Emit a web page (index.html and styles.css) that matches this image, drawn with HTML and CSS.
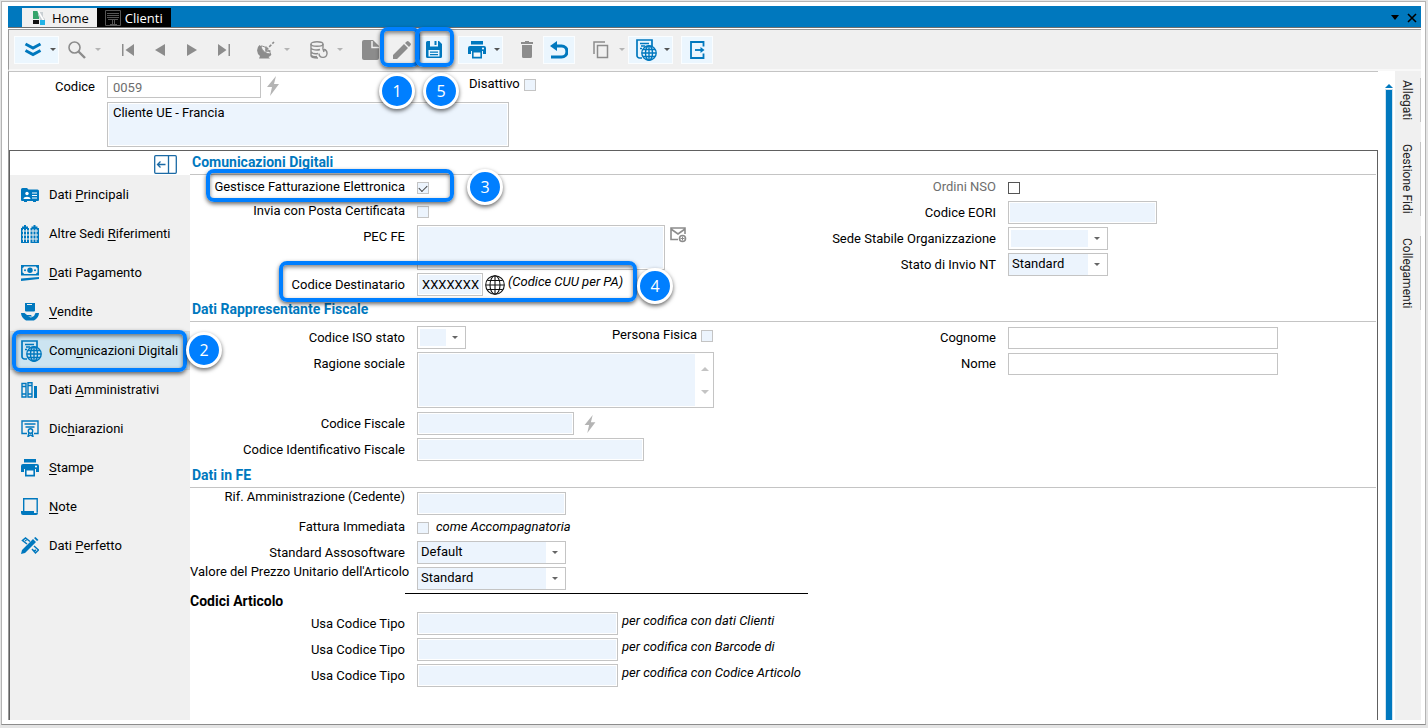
FILE: index.html
```html
<!DOCTYPE html>
<html lang="it">
<head>
    <meta charset="UTF-8">
    <meta name="viewport" content="width=device-width, initial-scale=1.0">
    <title>Clienti</title>
    <link rel="stylesheet" href="styles.css">
</head>
<body>

    <!-- Icone usate in più punti -->
    <svg class="sprites" width="0" height="0" aria-hidden="true">
        <symbol id="i-print" viewBox="0 0 18 18">
            <path d="M3 0h12v3.5H3zM2 5h14a2 2 0 0 1 2 2v6h-3v-3H3v3H0V7a2 2 0 0 1 2-2z"/>
            <path d="M4.8 10.8h8.4v5.8H4.8z" fill="#f4f8fb" stroke="currentColor" stroke-width="1.6"/>
            <circle cx="15" cy="7.500" r="1" fill="#fff"/>
        </symbol>
        <symbol id="i-web" viewBox="0 0 21 22">
            <path d="M6 19H3.500A2.500 2.500 0 0 1 1 16.500V1h15v6M4 4.500h9M5 7h4M4 9.500h2" fill="none" stroke="currentColor" stroke-width="1.700"/>
            <g fill="none" stroke="currentColor" stroke-width="1.400">
                <circle cx="13" cy="14" r="7.200"/>
                <ellipse cx="13" cy="14" rx="3.500" ry="7.200"/>
                <path d="M13 7v14M6 14h14M7 10.500h12M7 17.500h12"/>
            </g>
        </symbol>
        <symbol id="i-bolt" viewBox="0 0 12 20">
            <path d="M9 0 0 11h5L3 20l9-12H7z"/>
        </symbol>
    </svg>

    <div class="window">
        <header class="titlebar">
            <nav class="tabs">
                <a class="tab" href="#home">
                    <svg width="14" height="16" viewBox="0 0 14 16">
                        <path d="M1 1h6v8H1z" fill="#35a36a"/>
                        <path d="M7 2h4v5l2 2v5h-3L6 5z" fill="#c9cfd3"/>
                        <path d="m6 1 6 10" stroke="#fff" stroke-width="1.500"/>
                        <path d="M1 10h6v4H1z" fill="#111"/>
                        <path d="M8 10h5v5H8z" fill="#22b3e6"/>
                    </svg>
                    Home
                </a>
                <a class="tab tab-active" href="#clienti">
                    <svg width="16" height="16" viewBox="0 0 16 16" fill="none" stroke="#555">
                        <path d="M.5.5h15v15H.5zM2 3.500h12M2 5.500h12M2 7.500h12M3 9.500h10M7.500 10v5M9.500 10v5M5 14.500h7"/>
                    </svg>
                    Clienti
                </a>
            </nav>
            <div class="window-buttons">
                <button type="button" aria-label="Elenco finestre">
                    <svg width="8" height="5" viewBox="0 0 8 5"><path d="M0 0h8L4 5z"/></svg>
                </button>
                <button type="button" aria-label="Chiudi">
                    <svg width="10" height="10" viewBox="0 0 10 10"><path d="m1 1 8 8M9 1 1 9" stroke="#000" stroke-width="1.600"/></svg>
                </button>
            </div>
        </header>

        <div class="toolbar" role="toolbar">
            <button type="button" class="tool split on" aria-label="Espandi">
                <svg width="18" height="15" viewBox="0 0 18 15" fill="none" stroke="currentColor" stroke-width="3"><path d="m1.500 2 7.500 4 7.500-4M1.500 8.500l7.500 4 7.500-4"/></svg>
                <i class="caret"></i>
            </button>
            <button type="button" class="tool split" aria-label="Cerca">
                <svg width="18" height="18" viewBox="0 0 18 18" fill="none" stroke="currentColor"><circle cx="6.500" cy="6.500" r="5.500" stroke-width="1.600"/><path d="m10.500 10.500 6.500 6.500" stroke-width="2.400"/></svg>
                <i class="caret"></i>
            </button>
            <span class="gap"></span>
            <button type="button" class="tool" aria-label="Primo">
                <svg width="12" height="12" viewBox="0 0 12 12"><path d="M0 0h1.500v12H0zM12 0v12L3.500 6z"/></svg>
            </button>
            <button type="button" class="tool" aria-label="Precedente">
                <svg width="10" height="12" viewBox="0 0 10 12"><path d="M10 0v12L0 6z"/></svg>
            </button>
            <button type="button" class="tool" aria-label="Successivo">
                <svg width="10" height="12" viewBox="0 0 10 12"><path d="M0 0v12l10-6z"/></svg>
            </button>
            <button type="button" class="tool" aria-label="Ultimo">
                <svg width="12" height="12" viewBox="0 0 12 12"><path d="M10.500 0H12v12h-1.500zM0 0v12l8.500-6z"/></svg>
            </button>
            <span class="gap"></span>
            <button type="button" class="tool split" aria-label="Trasmetti">
                <svg width="18" height="18" viewBox="0 0 18 18">
                    <path d="M2.500 4A7 7 0 0 0 3 15l-1 2.500h11L11.500 16a6 6 0 0 0 3-2.500z"/>
                    <path d="M4 5c4 0 9 4 9.500 8-4 0-9-3-9.500-8z" fill="#f0f0f0" stroke="currentColor"/>
                    <path d="m9 9 8-8" stroke="currentColor" stroke-width="1.600" stroke-dasharray="3 1.500"/>
                    <path d="M9 5.500V10h4.500" fill="none" stroke="currentColor" stroke-width="1.500"/>
                </svg>
                <i class="caret"></i>
            </button>
            <span class="gap"></span>
            <button type="button" class="tool split" aria-label="Archivio">
                <svg width="18" height="18" viewBox="0 0 18 18" fill="none" stroke="currentColor" stroke-width="1.400">
                    <ellipse cx="7" cy="3" rx="6" ry="2.200"/>
                    <path d="M1 3v11.500C1 16 4 17 8 17M13 3v4M1 7c1 2 6 2.500 9 1.500M1 10.500c1 2 4 2.500 7 2M1 14c1 1.500 4 2 6 1.500"/>
                    <path d="M14 8.500a4 4 0 1 1-5 4M16 9l-3-1 1 3"/>
                </svg>
                <i class="caret"></i>
            </button>
            <span class="gap"></span>
            <button type="button" class="tool" aria-label="Nuovo">
                <svg width="17" height="20" viewBox="0 0 17 20"><path d="M2 0h9l6 6v12a2 2 0 0 1-2 2H2a2 2 0 0 1-2-2V2a2 2 0 0 1 2-2z"/><path d="M10 1v6.500h7" fill="none" stroke="#f0f0f0" stroke-width="1.500"/></svg>
            </button>
            <button type="button" class="tool" aria-label="Modifica">
                <svg width="18" height="18" viewBox="0 0 18 18"><path d="M0 18v-4L11 3l4 4L4 18zM12 2l1.700-1.500a1.500 1.500 0 0 1 2 0l1.800 1.800a1.500 1.500 0 0 1 0 2L16 6z"/></svg>
            </button>
            <button type="button" class="tool on" aria-label="Salva">
                <svg width="16" height="17" viewBox="0 0 16 17"><path fill-rule="evenodd" d="M1.500 0H13l3 3v12.500a1.500 1.500 0 0 1-1.500 1.500h-13A1.500 1.500 0 0 1 0 15.500v-14A1.500 1.500 0 0 1 1.500 0zM4 0v5.500h8V0h-1.500v4h-2V0zM2.500 9v6.500h11V9z"/><path d="M4 10.500h8v1.300H4zm0 2.500h8v1.300H4z"/></svg>
            </button>
            <span class="gap"></span>
            <button type="button" class="tool split on" aria-label="Stampa">
                <svg width="18" height="18"><use href="#i-print"/></svg>
                <i class="caret"></i>
            </button>
            <span class="gap"></span>
            <button type="button" class="tool" aria-label="Elimina">
                <svg width="12" height="17" viewBox="0 0 12 17"><path d="M4 0h4v1h4v2H0V1h4zM1 4h10v11.500a1.500 1.500 0 0 1-1.500 1.500h-7A1.500 1.500 0 0 1 1 15.500z"/></svg>
            </button>
            <button type="button" class="tool on" aria-label="Annulla">
                <svg width="18" height="18" viewBox="0 0 18 18"><path d="M7 0v10L0 5z"/><path d="M4 5h7.500a5 5 0 0 1 0 11H1" fill="none" stroke="currentColor" stroke-width="3.200"/></svg>
            </button>
            <span class="gap"></span>
            <button type="button" class="tool split" aria-label="Copia">
                <svg width="16" height="18" viewBox="0 0 16 18" fill="none" stroke="currentColor" stroke-width="1.500"><path d="M4.500 4.500h10v12h-10zM1 13V1h11"/></svg>
                <i class="caret"></i>
            </button>
            <button type="button" class="tool split on" aria-label="Comunicazioni">
                <svg width="21" height="22"><use href="#i-web"/></svg>
                <i class="caret"></i>
            </button>
            <span class="gap"></span>
            <button type="button" class="tool on" aria-label="Esci">
                <svg width="15" height="18" viewBox="0 0 15 18" fill="none" stroke="currentColor" stroke-width="1.800"><path d="M13.500 5.500V1H1v16h12.500v-4.500"/><path d="M5 9h7"/><path d="M10.500 6v6l4-3z" fill="currentColor" stroke="none"/></svg>
            </button>
        </div>

        <div class="workspace">
            <main class="card">
                <form class="customer">
                    <label for="codice">Codice</label>
                    <div class="line">
                        <input class="field white w-154" type="text" id="codice" value="0059">
                        <svg class="bolt" width="12" height="20"><use href="#i-bolt"/></svg>
                        <span class="disattivo">
                            <label for="disattivo">Disattivo</label>
                            <input class="check" type="checkbox" id="disattivo">
                        </span>
                    </div>
                    <textarea class="field descrizione" id="descrizione" aria-label="Descrizione">Cliente UE - Francia</textarea>
                </form>

                <div class="panel">
                    <nav class="menu">
                        <div class="menu-top">
                            <button type="button" aria-label="Comprimi menu">
                                <svg width="23" height="19" viewBox="0 0 23 19" fill="none" stroke="#1b6aa5" stroke-width="1.300"><rect x=".7" y=".7" width="21.600" height="17.600" rx="1"/><path d="M14.500 1v17M3.500 9.500h8M6.500 6.500l-3 3 3 3"/></svg>
                            </button>
                        </div>
                        <a href="#principali">
                            <svg width="18" height="14" viewBox="0 0 18 14"><path d="M0 1.500A1.500 1.500 0 0 1 1.500 0H6l1.500 1.500h9A1.500 1.500 0 0 1 18 3v9a1 1 0 0 1-1 1h-2v1h-3v-1H6v1H3v-1H1a1 1 0 0 1-1-1z"/><circle cx="6" cy="5.500" r="1.700" fill="#fff"/><path d="M2.500 11c0-3 7-3 7 0zM11 4.500h5v1h-5zm0 2.500h5v1h-5zm0 2.500h5v1h-5z" fill="#fff"/></svg>
                            <span>Dati <u>P</u>rincipali</span>
                        </a>
                        <a href="#sedi">
                            <svg width="18" height="18" viewBox="0 0 18 18"><path d="M0 3h1V1.500h2V0h2v1.500h2V3h1v15H0zM9.500 3h1V1.500h2V0h2v1.500h2V3h1.500v15H9.500z"/><path d="M2.500 4v13M5.500 4v13M12 4v13M15 4v13M1 6h16M1 10h16M1 14h16" stroke="#f0f0f0"/></svg>
                            <span>Altre Sedi <u>R</u>iferimenti</span>
                        </a>
                        <a href="#pagamento">
                            <svg width="18" height="16" viewBox="0 0 18 16"><path fill-rule="evenodd" d="M0 0h18v10.500H0zM3 1.500A2 2 0 0 1 1.500 3v4.500A2 2 0 0 1 3 9h12a2 2 0 0 1 1.500-1.500V3A2 2 0 0 1 15 1.500z"/><circle cx="9" cy="5.200" r="2.700"/><circle cx="4" cy="5.200" r="1"/><circle cx="14" cy="5.200" r="1"/><path d="M0 13.500 18 12v2L0 16z"/></svg>
                            <span><u>D</u>ati Pagamento</span>
                        </a>
                        <a href="#vendite">
                            <svg width="18" height="18" viewBox="0 0 18 18"><path d="M4 0h10v7.500a1 1 0 0 1-1 1H5a1 1 0 0 1-1-1z"/><path d="M6 1.500h5" stroke="#f0f0f0"/><path d="M0 10h3.500l2.500 2h4l1 1.500H7l3 1 3-1.500 1.500-3H18c0 3-2 6-5 7.500H5C2 16 0 13 0 10z"/></svg>
                            <span><u>V</u>endite</span>
                        </a>
                        <a class="selected" href="#comunicazioni">
                            <svg width="21" height="22"><use href="#i-web"/></svg>
                            <span>Com<u>u</u>nicazioni Digitali</span>
                        </a>
                        <a href="#amministrativi">
                            <svg width="17" height="16" viewBox="0 0 17 16" fill="none" stroke="currentColor" stroke-width="1.400"><path d="M1 1.500h4v13.500H1zM7 .7h4v14.300H7zM1 4.500h4M7 3.500h4M1 12h4M7 12h4"/><path d="M13 4h3v12h-3z" fill="currentColor" stroke="none"/></svg>
                            <span>Dati <u>A</u>mministrativi</span>
                        </a>
                        <a href="#dichiarazioni">
                            <svg width="18" height="17" viewBox="0 0 18 17" fill="none" stroke="currentColor" stroke-width="1.400"><path d="M6 13.500H1V1h16v12.500h-4M3.500 4h11M4.500 7h9"/><circle cx="9.500" cy="11" r="2.200"/><path d="m8 12.500-1 4 2.500-1.500 2.500 1.500-1-4"/></svg>
                            <span>Dic<u>h</u>iarazioni</span>
                        </a>
                        <a href="#stampe">
                            <svg width="18" height="18"><use href="#i-print"/></svg>
                            <span><u>S</u>tampe</span>
                        </a>
                        <a href="#note">
                            <svg width="17" height="17" viewBox="0 0 17 17"><path d="M2.700 13V.7h13.500v14" fill="none" stroke="currentColor" stroke-width="1.400"/><path d="M0 13h13v2h4a2 2 0 0 1-2 2H2a2 2 0 0 1-2-2z"/></svg>
                            <span><u>N</u>ote</span>
                        </a>
                        <a href="#perfetto">
                            <svg width="18" height="18" viewBox="0 0 18 18"><path d="m0 17 1-4L12 2l3 3L4 16zM13 1l1.500-1 3 3L16 4z"/><path d="M6 7 1.500 3.500 4.500 1 9 4.500M11 12l3.500 4 3-3L13 9M4 4l1.500-1M13 14l2-1" fill="none" stroke="currentColor" stroke-width="1.500"/></svg>
                            <span>Dati <u>P</u>erfetto</span>
                        </a>
                    </nav>

                    <form class="details">
                        <h2>Comunicazioni Digitali</h2>
                        <section class="columns comunicazioni">
                            <div class="column">
                                <div class="row short">
                                    <label for="gestisce">Gestisce Fatturazione Elettronica</label>
                                    <input class="check" type="checkbox" id="gestisce" checked>
                                </div>
                                <div class="row short">
                                    <label for="invia">Invia con Posta Certificata</label>
                                    <input class="check" type="checkbox" id="invia">
                                </div>
                                <div class="row top pec">
                                    <label for="pec">PEC FE</label>
                                    <textarea class="field" id="pec"></textarea>
                                    <svg class="mail" width="17" height="16" viewBox="0 0 17 16" fill="none" stroke="#8c8c8c" stroke-width="1.600"><path d="M8 12.500H1V1h14v6M1 2l7 5 7-5"/><circle cx="12.500" cy="11.500" r="3"/><path d="M12.500 9.500v4M10.500 11.500h4" stroke-width="1"/></svg>
                                </div>
                                <div class="row">
                                    <label for="destinatario">Codice Destinatario</label>
                                    <input class="field w-66" type="text" id="destinatario" value="XXXXXXX">
                                    <svg class="globe" width="20" height="20" viewBox="0 0 20 20" fill="none" stroke="#111" stroke-width="1.100"><circle cx="10" cy="10" r="9.300"/><ellipse cx="10" cy="10" rx="5" ry="9.300"/><path d="M10 1v18M1 10h18M2.500 5.500h15M2.500 14.500h15"/></svg>
                                    <em class="hint">(Codice CUU per PA)</em>
                                </div>
                            </div>
                            <div class="column">
                                <div class="row short">
                                    <label class="dim" for="nso">Ordini NSO</label>
                                    <input class="check plain" type="checkbox" id="nso">
                                </div>
                                <div class="row">
                                    <label for="eori">Codice EORI</label>
                                    <input class="field w-149" type="text" id="eori">
                                </div>
                                <div class="row">
                                    <label for="sede">Sede Stabile Organizzazione</label>
                                    <span class="select w-100"><select class="empty" id="sede"><option></option></select></span>
                                </div>
                                <div class="row">
                                    <label for="stato">Stato di Invio NT</label>
                                    <span class="select w-100"><select id="stato"><option>Standard</option></select></span>
                                </div>
                            </div>
                        </section>

                        <h2>Dati Rappresentante Fiscale</h2>
                        <section class="columns rappresentante">
                            <div class="column">
                                <div class="row">
                                    <label for="iso">Codice ISO stato</label>
                                    <span class="select w-49"><select class="empty" id="iso"><option></option></select></span>
                                    <span class="persona">
                                        <label for="persona">Persona Fisica</label>
                                        <input class="check" type="checkbox" id="persona">
                                    </span>
                                </div>
                                <div class="row top ragione">
                                    <label for="ragione">Ragione sociale</label>
                                    <div class="memo">
                                        <textarea id="ragione"></textarea>
                                        <span class="arrows"><i></i><i></i></span>
                                    </div>
                                </div>
                                <div class="row">
                                    <label for="fiscale">Codice Fiscale</label>
                                    <input class="field w-157" type="text" id="fiscale">
                                    <svg class="bolt" width="12" height="18"><use href="#i-bolt"/></svg>
                                </div>
                                <div class="row">
                                    <label for="identificativo">Codice Identificativo Fiscale</label>
                                    <input class="field w-227" type="text" id="identificativo">
                                </div>
                            </div>
                            <div class="column">
                                <div class="row">
                                    <label for="cognome">Cognome</label>
                                    <input class="field white w-270" type="text" id="cognome">
                                </div>
                                <div class="row">
                                    <label for="nome">Nome</label>
                                    <input class="field white w-270" type="text" id="nome">
                                </div>
                            </div>
                        </section>

                        <h2>Dati in FE</h2>
                        <section class="column dati-fe">
                            <div class="row high">
                                <label for="rif">Rif. Amministrazione (Cedente)</label>
                                <input class="field w-149" type="text" id="rif">
                            </div>
                            <div class="row low">
                                <label for="immediata">Fattura Immediata</label>
                                <input class="check" type="checkbox" id="immediata">
                                <em class="note">come Accompagnatoria</em>
                            </div>
                            <div class="row">
                                <label for="asso">Standard Assosoftware</label>
                                <span class="select w-149"><select id="asso"><option>Default</option></select></span>
                            </div>
                            <div class="row high">
                                <label for="prezzo">Valore del Prezzo Unitario dell'Articolo</label>
                                <span class="select w-149"><select id="prezzo"><option>Standard</option></select></span>
                            </div>
                        </section>

                        <h3><span>Codici Articolo</span></h3>
                        <section class="column">
                            <div class="row">
                                <label for="tipo1">Usa Codice Tipo</label>
                                <input class="field w-201" type="text" id="tipo1">
                                <em class="hint">per codifica con dati Clienti</em>
                            </div>
                            <div class="row">
                                <label for="tipo2">Usa Codice Tipo</label>
                                <input class="field w-201" type="text" id="tipo2">
                                <em class="hint">per codifica con Barcode di</em>
                            </div>
                            <div class="row">
                                <label for="tipo3">Usa Codice Tipo</label>
                                <input class="field w-201" type="text" id="tipo3">
                                <em class="hint">per codifica con Codice Articolo</em>
                            </div>
                        </section>
                    </form>
                </div>
            </main>

            <div class="scroll">
                <svg width="8" height="4" viewBox="0 0 8 4"><path d="M0 4 4 0l4 4z"/></svg>
                <span class="thumb"></span>
            </div>

            <aside class="side-tabs">
                <a href="#allegati">Allegati</a>
                <a href="#fidi">Gestione Fidi</a>
                <a href="#collegamenti">Collegamenti</a>
            </aside>
        </div>
    </div>

    <!-- Passi della guida sopra la finestra -->
    <div class="frame frame-1"></div>
    <div class="frame frame-2"></div>
    <div class="frame frame-3"></div>
    <div class="frame frame-4"></div>
    <div class="frame frame-5"></div>
    <span class="step step-1">1</span>
    <span class="step step-2">2</span>
    <span class="step step-3">3</span>
    <span class="step step-4">4</span>
    <span class="step step-5">5</span>

</body>
</html>
```
FILE: styles.css
```css
* {
    box-sizing: border-box;
}

body {
    margin: 0;
    height: 100vh;
    padding: 1px 2px 3px 1px;
    background: #e4e4e4;
    font-family: Roboto, "Liberation Sans", sans-serif;
    font-size: 13px;
    line-height: 16px;
    color: #000;
    overflow: hidden;
}

a {
    color: inherit;
    text-decoration: none;
}

button {
    padding: 0;
    border: none;
    background: none;
    font: inherit;
    color: inherit;
}

svg {
    display: block;
    flex: none;
    fill: currentColor;
}

svg[fill="none"] {
    fill: none;
}

.sprites {
    position: absolute;
}

/* Finestra */
.window {
    display: flex;
    flex-direction: column;
    height: 100%;
    padding: 4px 4px 4px 6px;
    background: #fff;
    border: 1px solid #b4b4b4;
    border-bottom-color: #8c8c8c;
}

.titlebar {
    display: flex;
    justify-content: space-between;
    height: 22px;
    flex: none;
    padding: 2px 4px 0 14px;
    background: #0078be;
    border-bottom: 1px solid #6e6e6e;
}

.tabs {
    display: flex;
}

.tab {
    display: flex;
    align-items: center;
    gap: 6px;
    padding: 0 8px 0 10px;
    background: #f0f0f0;
    font-family: "Open Sans", "Noto Sans", sans-serif;
    font-size: 13px;
}

.tab-active {
    gap: 4px;
    padding-left: 8px;
    background: #000;
    color: #fff;
}

.window-buttons {
    display: flex;
    align-items: center;
    gap: 8px;
}

/* Barra strumenti */
.toolbar {
    display: flex;
    align-items: center;
    height: 42px;
    flex: none;
    margin-top: 1px;
    padding: 0 5px;
    background: #f0f0f0;
    border-left: 1px solid #999;
    border-top: 1px solid #999;
    border-bottom: 2px solid #f8f8f8;
    color: #8c8c8c;
}

.tool {
    display: flex;
    align-items: center;
    justify-content: center;
    width: 32px;
    height: 28px;
}

.split {
    width: 45px;
    justify-content: space-between;
    padding-right: 3px;
}

.split svg {
    margin: 0 auto;
}

.on {
    background: #ebf6fe;
    border: 1px solid #fafdff;
    color: #0078be;
}

.split.on {
    padding-right: 2px;
}

.gap {
    width: 8px;
}

.caret {
    border: 3px solid transparent;
    border-top-color: #b4b4b4;
    border-bottom: none;
}

.on .caret {
    border-top-color: #555;
}

/* Area di lavoro */
.workspace {
    display: flex;
    flex: 1;
    min-height: 0;
}

.card {
    display: flex;
    flex-direction: column;
    flex: 1;
    min-width: 0;
    border-left: 1px solid #999;
    border-top: 1px solid #c4c4c4;
}

.customer {
    display: grid;
    grid-template-columns: 86px 1fr;
    gap: 4px 12px;
    padding: 4px 0 3px;
    flex: none;
}

.customer > label {
    text-align: right;
    line-height: 22px;
}

.line {
    display: flex;
    gap: 6px;
    height: 22px;
}

.disattivo {
    display: flex;
    gap: 4px;
    margin-left: 184px;
}

.disattivo .check {
    margin-top: 3px;
}

.field {
    margin: 0;
    padding: 2px 5px;
    height: 23px;
    border: 1px solid #c4c4c4;
    box-shadow: inset 0 0 0 1px #fff;
    background: #ecf4fd;
    font: inherit;
    color: #000;
    resize: none;
}

.descrizione {
    grid-column: 2;
    width: 402px;
    height: 45px;
}

.white {
    height: 22px;
    background: #fff;
}

#codice {
    color: #6e6e6e;
}

#destinatario {
    padding: 2px 0 2px 4px;
}

.bolt {
    color: #b4b4b4;
}

.w-49 { width: 49px; }
.w-66 { width: 66px; }
.w-100 { width: 100px; }
.w-149 { width: 149px; }
.w-154 { width: 154px; }
.w-157 { width: 157px; }
.w-201 { width: 201px; }
.w-227 { width: 227px; }
.w-270 { width: 270px; }

.check {
    appearance: none;
    width: 12px;
    height: 12px;
    margin: 0;
    flex: none;
    border: 1px solid #c4c4c4;
    background: #ecf4fd;
}

.check:checked::after {
    content: "";
    display: block;
    width: 7px;
    height: 4px;
    margin: 2px 0 0 1px;
    border-left: 1px solid #444;
    border-bottom: 1px solid #444;
    transform: rotate(-45deg);
}

.plain {
    border-color: #555;
    background: #fff;
}

.select {
    position: relative;
    height: 23px;
}

.select select {
    appearance: none;
    width: 100%;
    height: 100%;
    padding: 0 20px 1px 3px;
    border: 1px solid #c4c4c4;
    border-radius: 0;
    background: linear-gradient(90deg, #ecf4fd calc(100% - 19px), #fff calc(100% - 19px));
    font: inherit;
    color: #000;
}

.select .empty {
    box-shadow: inset 0 0 0 2px #fff;
}

.select::after {
    content: "";
    position: absolute;
    right: 8px;
    top: 10px;
    border: 3px solid transparent;
    border-top-color: #666;
    border-bottom: none;
}

/* Pannello */
.panel {
    display: flex;
    flex: 1;
    min-height: 0;
    border: 1px solid #606060;
    border-bottom: none;
}

.menu {
    width: 180px;
    flex: none;
    background: #f0f0f0;
}

.menu-top {
    display: flex;
    justify-content: flex-end;
    height: 24px;
    padding: 3px 13px 0 0;
    background: #fff;
}

.menu a {
    display: grid;
    grid-template-columns: 18px 1fr;
    gap: 10px;
    align-items: center;
    height: 39px;
    padding-left: 11px;
}

.menu svg {
    color: #0078be;
}

.menu u {
    text-underline-offset: 2px;
}

.menu .selected {
    background: #cce4f1;
    border: 1px solid #d8d8d8;
    padding-left: 10px;
}

.details {
    flex: 1;
    min-width: 0;
    padding-right: 1px;
}

h2 {
    height: 24px;
    margin: 0;
    padding: 3px 2px 0;
    border-bottom: 1px solid #c4c4c4;
    font-size: 14px;
    font-weight: bold;
    color: #0078be;
}

.columns {
    display: grid;
    grid-template-columns: 591px 1fr;
}

.column {
    display: flex;
    flex-direction: column;
    gap: 3px;
}

.comunicazioni {
    height: 123px;
    padding-top: 2px;
}

.rappresentante {
    height: 142px;
    padding-top: 4px;
}

.dati-fe {
    padding-top: 4px;
}

.row {
    display: flex;
    align-items: center;
    height: 23px;
}

.row > label {
    width: 215px;
    margin-right: 12px;
    flex: none;
    text-align: right;
    white-space: nowrap;
}

.short {
    height: 21px;
}

.short > label {
    padding-bottom: 2px;
}

.low {
    height: 20px;
}

.low > label {
    padding-bottom: 3px;
}

.top {
    align-items: flex-start;
}

.top > label {
    padding-top: 4px;
}

.high > label {
    align-self: flex-start;
    line-height: 10px;
}

.dim {
    color: #6e6e6e;
}

.pec,
.pec .field {
    height: 45px;
}

.pec .field {
    width: 248px;
}

.mail {
    margin: 2px 0 0 5px;
}

.globe {
    margin: 0 3px 0 2px;
}

.hint {
    padding: 0 0 6px 4px;
}

.globe + .hint {
    padding-left: 0;
}

.note {
    padding: 0 0 3px 7px;
}

.persona {
    display: flex;
    gap: 4px;
    margin-left: 146px;
    padding-bottom: 6px;
}

.persona .check {
    margin-top: 3px;
}

.ragione {
    height: 57px;
}

.memo {
    display: flex;
    width: 297px;
    height: 56px;
    padding: 1px;
    border: 1px solid #c4c4c4;
}

.memo textarea {
    flex: 1;
    margin: 0;
    border: none;
    background: #ecf4fd;
    font: inherit;
    resize: none;
}

.arrows {
    display: flex;
    flex-direction: column;
    justify-content: space-between;
    padding: 13px 3px 12px 6px;
}

.arrows i {
    border: 4px solid transparent;
    border-top: none;
    border-bottom-color: #c4c4c4;
}

.arrows i + i {
    border-top: 4px solid #c4c4c4;
    border-bottom: none;
}

.rappresentante .bolt {
    margin-left: 10px;
}

h3 {
    display: flex;
    height: 19px;
    margin: 3px 0 0;
    font-size: 14px;
    line-height: 16px;
}

h3 span {
    width: 215px;
}

/* Filetto a destra del titolo */
h3::after {
    content: "";
    width: 403px;
    height: 1px;
    background: #000;
}

/* Barra di scorrimento e schede laterali */
.scroll {
    display: flex;
    flex-direction: column;
    align-items: center;
    width: 17px;
    padding: 13px 0 0 5px;
    color: #0078be;
}

.thumb {
    flex: 1;
    width: 8px;
    margin-top: 1px;
    background: #0078be;
    border: 1px solid #cfe3f0;
    border-width: 1px 1px 0;
}

.side-tabs {
    display: flex;
    flex-direction: column;
    gap: 20px;
    width: 26px;
    padding-top: 7px;
    background: #f0f0f0;
}

.side-tabs a {
    writing-mode: vertical-rl;
    padding: 2px 5px 2px 4px;
    border-right: 1px solid #c4c4c4;
    font-size: 12px;
    color: #222;
}

/* Guida */
.frame {
    position: absolute;
    border: 4px solid #007fff;
    border-radius: 8px;
    box-shadow: 0 2px 4px rgba(0, 0, 0, 0.6), inset 0 2px 4px rgba(0, 0, 0, 0.5);
}

.frame-1 { left: 380px; top: 27px; width: 40px; height: 40px; }
.frame-2 { left: 12px; top: 330px; width: 175px; height: 42px; }
.frame-3 { left: 206px; top: 169px; width: 248px; height: 33px; }
.frame-4 { left: 279px; top: 261px; width: 358px; height: 41px; }
.frame-5 { left: 415px; top: 27px; width: 39px; height: 40px; }

.step {
    position: absolute;
    width: 36px;
    height: 36px;
    border: 3px solid #fff;
    border-radius: 50%;
    background: #007fff;
    box-shadow: 0 2px 4px rgba(0, 0, 0, 0.6);
    color: #fff;
    font-family: "Open Sans", "Noto Sans", sans-serif;
    font-size: 16px;
    line-height: 30px;
    text-align: center;
}

.step-1 { left: 379px; top: 73px; }
.step-2 { left: 186px; top: 332px; }
.step-3 { left: 467px; top: 169px; }
.step-4 { left: 637px; top: 268px; }
.step-5 { left: 423px; top: 73px; }
```
